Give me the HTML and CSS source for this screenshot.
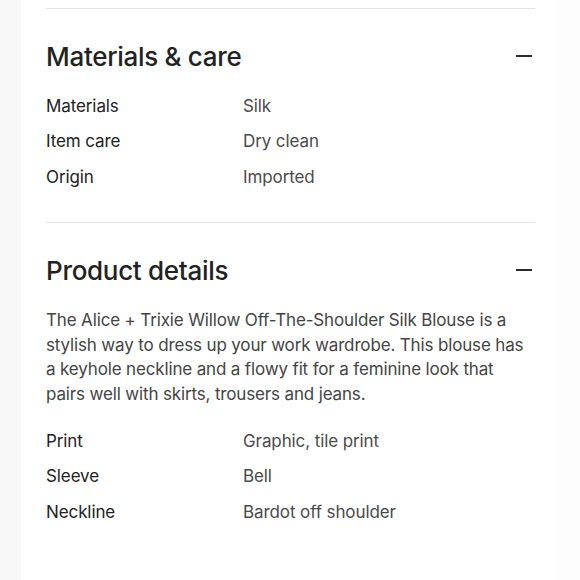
FILE: index.html
```html
<!DOCTYPE html>
<html>
<head>
<meta charset="utf-8">
<link rel="stylesheet" href="styles.css">
</head>
<body>
<div class="page">
  <section class="section">
    <div class="head">
      <h2 class="title">Materials &amp; care</h2>
      <span class="minus"></span>
    </div>
    <dl class="specs">
      <div class="row"><dt>Materials</dt><dd>Silk</dd></div>
      <div class="row"><dt>Item care</dt><dd>Dry clean</dd></div>
      <div class="row"><dt>Origin</dt><dd>Imported</dd></div>
    </dl>
  </section>
  <section class="section">
    <div class="head">
      <h2 class="title">Product details</h2>
      <span class="minus"></span>
    </div>
    <p class="desc">The Alice + Trixie Willow Off-The-Shoulder Silk Blouse is a stylish way to dress up your work wardrobe. This blouse has a keyhole neckline and a flowy fit for a feminine look that pairs well with skirts, trousers and jeans.</p>
    <dl class="specs">
      <div class="row"><dt>Print</dt><dd>Graphic, tile print</dd></div>
      <div class="row"><dt>Sleeve</dt><dd>Bell</dd></div>
      <div class="row"><dt>Neckline</dt><dd>Bardot off shoulder</dd></div>
    </dl>
  </section>
</div>
</body>
</html>
```
FILE: styles.css
```css
html, body {
  margin: 0;
  padding: 0;
}
body {
  font-family: Inter, "Noto Sans", sans-serif;
  color: #222;
  width: 580px;
  height: 580px;
  overflow: hidden;
  background: linear-gradient(to right, #f8f8f8 0, #f8f8f8 21px, #fff 21px, #fff 555px, #fdfdfd 555px);
}
.page {
  margin: 0 45px 0 46px;
  padding-top: 8px;
}
.section {
  border-top: 1px solid #e4e4e4;
  padding-top: 29px;
  padding-bottom: 27.5px;
}
.head {
  display: flex;
  align-items: center;
  justify-content: space-between;
  height: 36px;
}
.title {
  margin: 0;
  font-size: 26px;
  font-weight: 500;
  letter-spacing: -0.3px;
  color: #222;
}
.minus {
  width: 16px;
  height: 2px;
  background: #2a2a2a;
  margin-right: 3px;
}
.specs {
  margin: 0;
  padding-top: 14px;
}
.row {
  display: grid;
  grid-template-columns: 197px 1fr;
  height: 35.5px;
  align-items: center;
  font-size: 17px;
  letter-spacing: -0.1px;
}
dt {
  color: #222;
}
dd {
  margin: 0;
  color: #4a4a4a;
}
.desc {
  margin: 0;
  padding-top: 20px;
  font-size: 17px;
  line-height: 24.5px;
  letter-spacing: -0.15px;
  color: #444;
}
.desc + .specs {
  padding-top: 17px;
}
```
